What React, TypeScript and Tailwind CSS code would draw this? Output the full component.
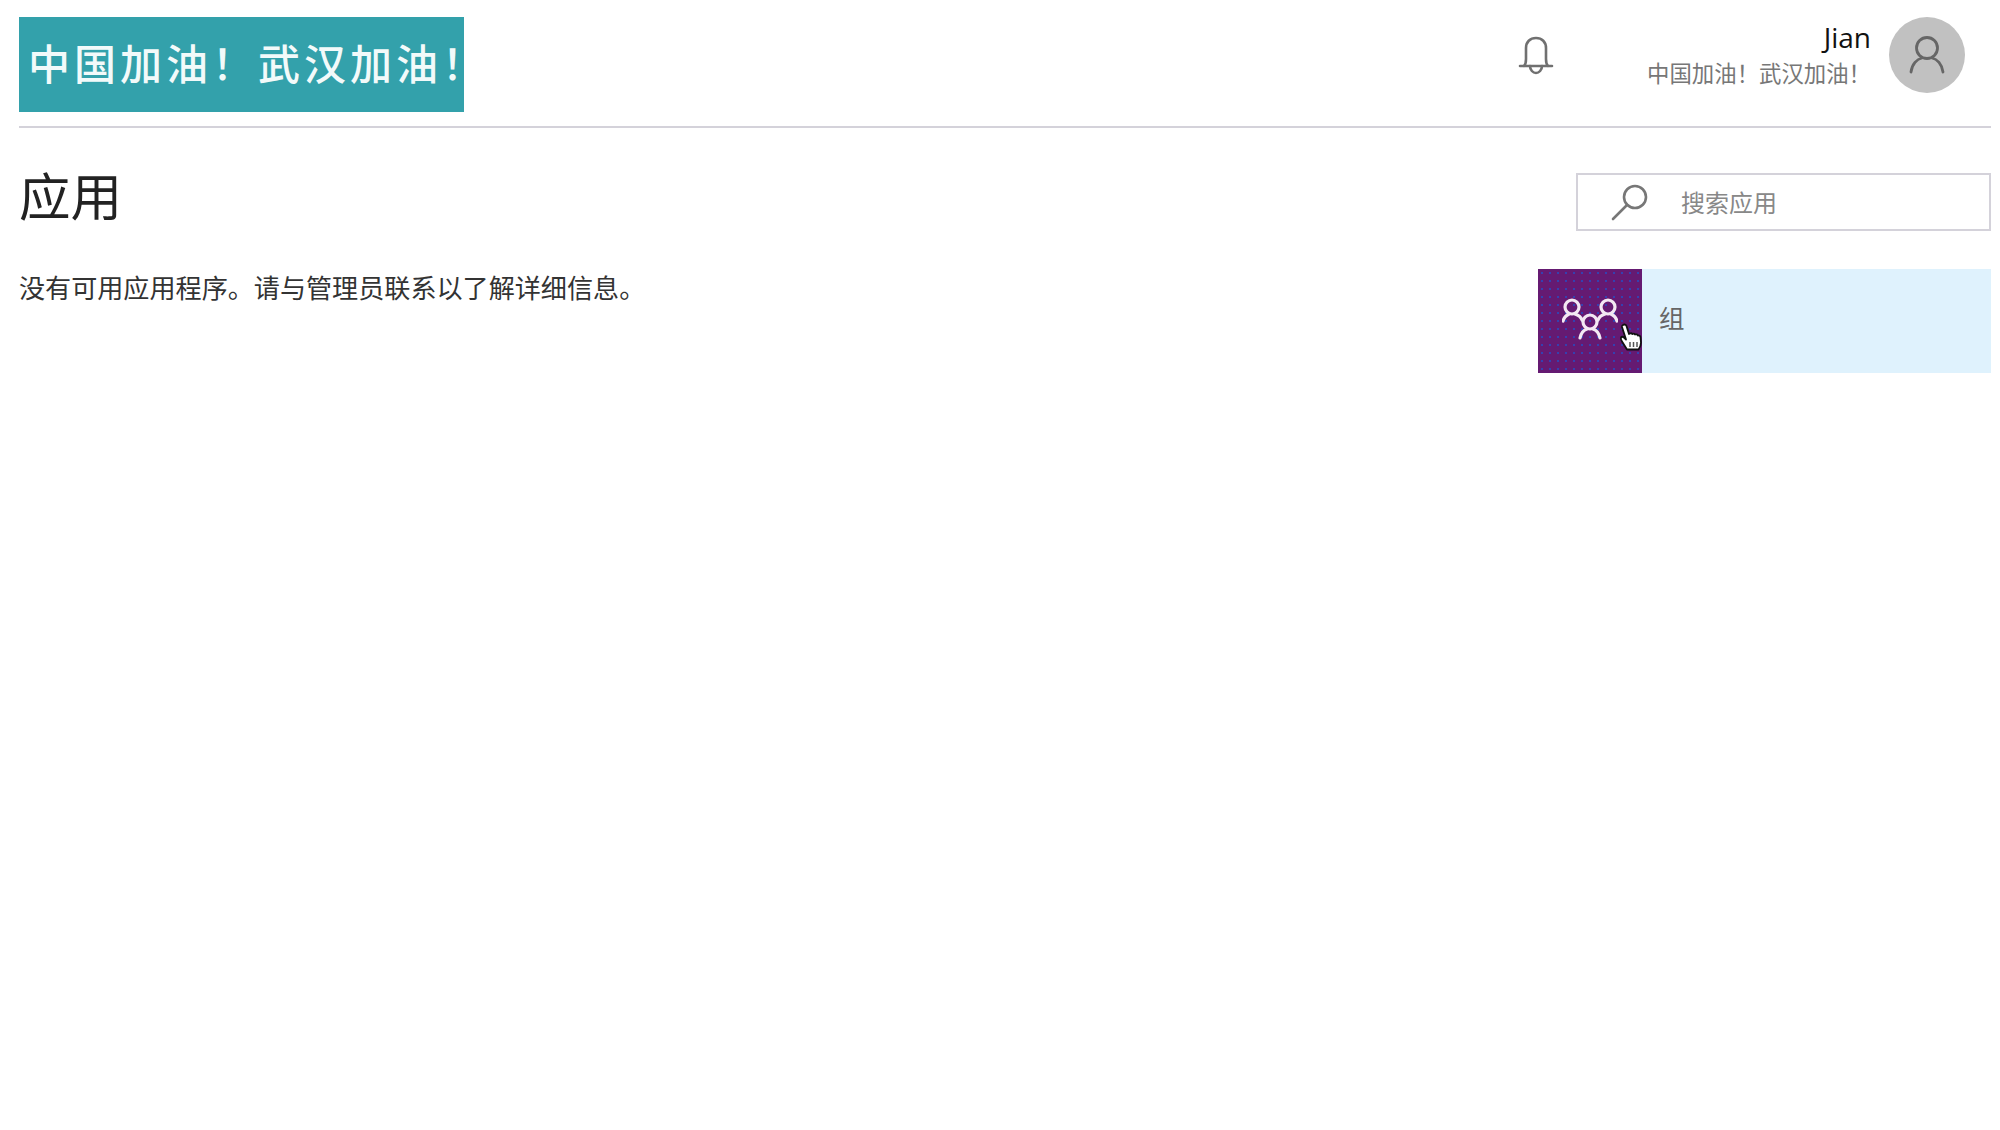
const cjk = "font-['Noto_Sans_CJK_SC','Noto_Sans',sans-serif]";

function Bell() {
  return (
    <svg width="36" height="40" viewBox="0 0 36 40" fill="none" stroke="#707070" strokeWidth="2.6" strokeLinecap="round" strokeLinejoin="round">
      <path d="M2 30h32M6 30c2-2 2-4 2-7V12C8 6 12 2 18 2s10 4 10 10v11c0 3 0 5 2 7" />
      <path d="M12 30c0 4 3 7 6 7s6-3 6-7" />
    </svg>
  );
}

function Person() {
  return (
    <svg width="36" height="40" viewBox="0 0 36 40" fill="none" stroke="#666" strokeWidth="2.8" strokeLinecap="round">
      <circle cx="18" cy="13" r="10.5" />
      <path d="M2 37c1-8 6-13 11-14M34 37c-1-8-6-13-11-14" />
    </svg>
  );
}

function SearchIcon() {
  return (
    <svg width="38" height="38" viewBox="0 0 38 38" fill="none" stroke="#777" strokeWidth="2.6" strokeLinecap="round">
      <circle cx="24" cy="14" r="11" />
      <path d="M16 22L2 36" />
    </svg>
  );
}

function Groups() {
  return (
    <svg width="56" height="48" viewBox="0 0 56 48" fill="none" stroke="#f3e8f3" strokeWidth="3.2" strokeLinecap="round">
      <circle cx="10" cy="10" r="7" />
      <path d="M1 24c1-4 4-6 6-7M13 17c3 1 6 3 7 6" />
      <circle cx="46" cy="10" r="7" />
      <path d="M55 24c-1-4-4-6-6-7M43 17c-3 1-6 3-7 6" />
      <circle cx="28" cy="25" r="7" />
      <path d="M18 41c1-5 4-8 7-9M31 32c3 1 6 4 7 9" />
    </svg>
  );
}

function Hand() {
  return (
    <svg width="26" height="30" viewBox="0 0 26 30">
      <path d="M5 2c1.500-1 3-.500 3.500 1L11 11l1-.5c1-.5 2 0 2.500.5 1-.500 2-.300 2.500.500 1-.500 2.500 0 3 1 1-.200 2.500.500 2.500 2l.500 5c0 3-1 5-2.500 7H9l-5-8c-1-1.500-1.500-3-1-4s2-1 3 0l2 2L4 4c-.2-1 0-1.500 1-2z" fill="#fff" stroke="#111" strokeWidth="1.800" strokeLinejoin="round" />
      <path d="M12 19v5M15.500 19v5M19 19v5" stroke="#555" strokeWidth="1.500" />
    </svg>
  );
}

export default function App() {
  return (
    <div className={`min-h-[1130px] bg-white pl-[19px] pr-[9px] ${cjk}`}>
      <header className="flex h-[128px] items-start border-b-2 border-[#d4d2da] pt-[17px]">
        <div className="h-[95px] w-[445px] whitespace-nowrap bg-[#33a1ab] pl-[9px] text-[42px] font-medium leading-[90px] tracking-[4px] text-[#f2fafa]">
          中国加油！武汉加油！
        </div>
        <div className="ml-auto mt-[19px]"><Bell /></div>
        <div className="ml-[72px] flex w-[245px] flex-col items-end">
          <div className="mt-[1px] text-[28px] leading-[38px] text-[#111] font-['Open_Sans',sans-serif]">Jian</div>
          <div className="text-[22.400px] leading-[32px] text-[#777]">中国加油！武汉加油！</div>
        </div>
        <div className="ml-[18px] mr-[26px] flex h-[76px] w-[76px] items-center justify-center rounded-full bg-[#c1c1c1]"><Person /></div>
      </header>
      <main className="flex items-start justify-between">
        <div>
          <h1 className="mt-[31px] text-[51.500px] leading-[70px] text-[#222]">应用</h1>
          <p className="mt-[40px] text-[26.100px] leading-[36px] text-[#333]">没有可用应用程序。请与管理员联系以了解详细信息。</p>
        </div>
        <aside className="w-[453px]">
          <div className="ml-[38px] mt-[45px] flex h-[58px] items-center border-2 border-[#d4d2da] pl-[33px]">
            <SearchIcon />
            <span className="ml-[32px] text-[24px] text-[#888]">搜索应用</span>
          </div>
          <div className="mt-[38px] flex h-[104px] items-center bg-[#dff2fd]">
            <div className="relative flex h-[104px] w-[104px] items-center justify-center bg-[#651a72] bg-[radial-gradient(#3540b0_1px,transparent_1.500px)] bg-[length:8px_8px]">
              <Groups />
              <div className="absolute left-[80px] top-[54px]"><Hand /></div>
            </div>
            <span className="mb-[7px] ml-[17px] text-[25.500px] text-[#666]">组</span>
          </div>
        </aside>
      </main>
    </div>
  );
}
